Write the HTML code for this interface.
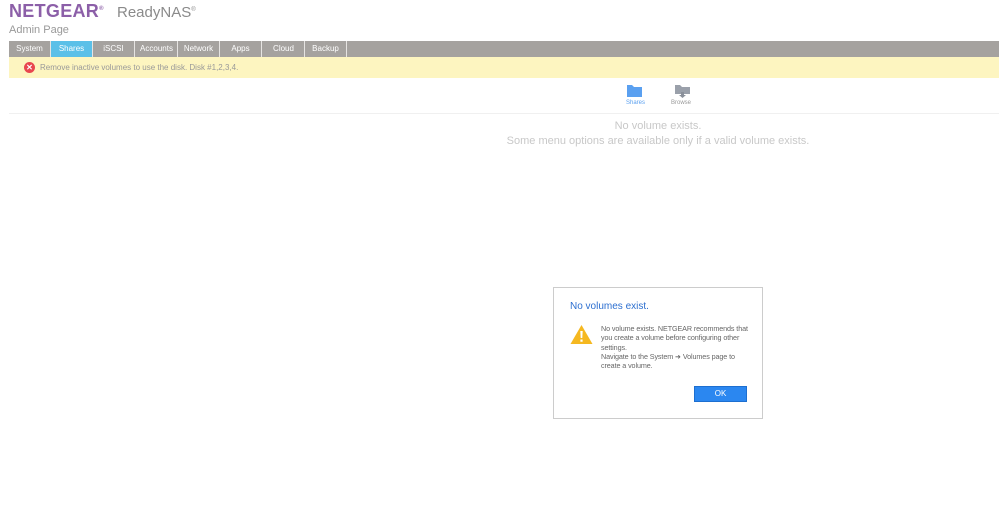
<!DOCTYPE html><html><head><style>
body{margin:0;width:999px;height:524px;background:#fff;font-family:"Liberation Sans",sans-serif;position:relative;overflow:hidden}
.a{position:absolute}
.tabs{left:9px;top:41px;width:990px;height:16px;background:#a5a29f}
.tab{position:absolute;top:0;height:16px;width:41px;border-right:1px solid #e6e4e2;color:#fff;font-size:8px;line-height:16px;text-align:center}
</style></head><body>
<div class="a" style="left:9px;top:1px;font-size:18px;font-weight:bold;color:#8c5fa8;letter-spacing:0.3px">NETGEAR<sup style="font-size:6px">®</sup></div>
<div class="a" style="left:117px;top:4px;font-size:15px;color:#8a8a8a">ReadyNAS<sup style="font-size:6px">®</sup></div>
<div class="a" style="left:9px;top:24px;font-size:11px;color:#999">Admin Page</div>
<div class="a tabs">
<div class="tab" style="left:0">System</div>
<div class="tab" style="left:42px;background:#5bc0e8">Shares</div>
<div class="tab" style="left:84px">iSCSI</div>
<div class="tab" style="left:127px">Accounts</div>
<div class="tab" style="left:169px">Network</div>
<div class="tab" style="left:211px">Apps</div>
<div class="tab" style="left:254px">Cloud</div>
<div class="tab" style="left:296px">Backup</div>
</div>
<div class="a" style="left:9px;top:57px;width:990px;height:21px;background:#fdf5c0"></div>
<div class="a" style="left:24px;top:62px;width:11px;height:11px;border-radius:50%;background:#e8474f;color:#fff;font-size:8px;line-height:11px;text-align:center;font-weight:bold">✕</div>
<div class="a" style="left:40px;top:63px;font-size:8px;color:#999">Remove inactive volumes to use the disk. Disk #1,2,3,4.</div>
<svg class="a" style="left:627px;top:84px" width="15" height="13"><path d="M0 1h5l2 2h8v10H0z" fill="#5aa0f0"/></svg>
<svg class="a" style="left:675px;top:84px" width="15" height="14"><path d="M0 1h5l2 2h8v7H0z" fill="#9aa0aa"/><path d="M6 8h3v3h2l-3.5 3-3.5-3h2z" fill="#8a909a"/></svg>
<div class="a" style="left:626px;top:100px;font-size:6px;color:#5aa0f0">Shares</div>
<div class="a" style="left:671px;top:100px;font-size:6px;color:#999">Browse</div>
<div class="a" style="left:9px;top:113px;width:990px;height:1px;background:#f0f0f0"></div>
<div class="a" style="left:400px;top:119px;width:516px;text-align:center;font-size:11px;line-height:15px;color:#c8c8c8">No volume exists.<br>Some menu options are available only if a valid volume exists.</div>
<div class="a" style="left:553px;top:287px;width:208px;height:130px;border:1px solid #ccc;background:#fff">
<div class="a" style="left:16px;top:13px;font-size:10px;color:#2c6fd0">No volumes exist.</div>
<svg class="a" style="left:16px;top:36px" width="23" height="21"><path d="M11.5 1L22.5 20H.5z" fill="#f5b820"/><path d="M10.3 7h2.4l-.4 7h-1.6z M10.4 15.5h2.2v2.2h-2.2z" fill="#fff"/></svg>
<div class="a" style="left:47px;top:36px;width:150px;font-size:7.2px;line-height:9.3px;color:#666;letter-spacing:-0.1px">No volume exists. NETGEAR recommends that you create a volume before configuring other settings.<div style="margin-top:0">Navigate to the System ➜ Volumes page to create a volume.</div></div>
<div class="a" style="left:140px;top:98px;width:51px;height:14px;background:#2b87f0;border:1px solid #1d6fd0;color:#fff;font-size:8px;line-height:14px;text-align:center">OK</div>
</div>
</body></html>
